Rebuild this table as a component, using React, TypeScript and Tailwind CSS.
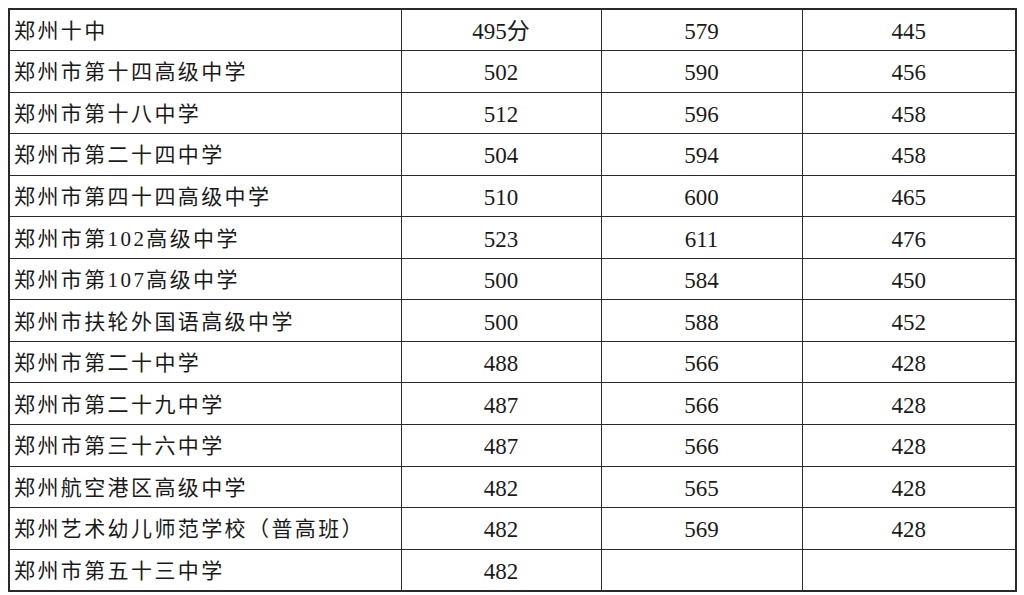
const rows: [string, string, string, string][] = [
  ["郑州十中", "495分", "579", "445"],
  ["郑州市第十四高级中学", "502", "590", "456"],
  ["郑州市第十八中学", "512", "596", "458"],
  ["郑州市第二十四中学", "504", "594", "458"],
  ["郑州市第四十四高级中学", "510", "600", "465"],
  ["郑州市第102高级中学", "523", "611", "476"],
  ["郑州市第107高级中学", "500", "584", "450"],
  ["郑州市扶轮外国语高级中学", "500", "588", "452"],
  ["郑州市第二十中学", "488", "566", "428"],
  ["郑州市第二十九中学", "487", "566", "428"],
  ["郑州市第三十六中学", "487", "566", "428"],
  ["郑州航空港区高级中学", "482", "565", "428"],
  ["郑州艺术幼儿师范学校（普高班）", "482", "569", "428"],
  ["郑州市第五十三中学", "482", "", ""],
];

export default function App() {
  return (
    <div className="w-[1024px] h-[595px] bg-white pt-[8px] pl-[8px] text-[#1a1a1a] font-['Liberation_Serif','Noto_Sans_CJK_SC',serif]">
      <table className="border-collapse border-2 border-[#2a2a2a] table-fixed w-[1007px]">
        <colgroup>
          <col className="w-[392px]" />
          <col className="w-[200px]" />
          <col className="w-[201px]" />
          <col className="w-[214px]" />
        </colgroup>
        <tbody>
          {rows.map((r, i) => (
            <tr key={i} className="h-[41.55px]">
              <td className="border-[1.5px] border-[#2a2a2a] p-0 pl-[4px] pt-[3px] text-[21px] tracking-[2.4px] leading-none whitespace-nowrap">
                {r[0]}
              </td>
              <td className="border-[1.5px] border-[#2a2a2a] p-0 pt-[3px] text-center text-[23px] leading-none">{r[1]}</td>
              <td className="border-[1.5px] border-[#2a2a2a] p-0 pt-[3px] text-center text-[23px] leading-none">{r[2]}</td>
              <td className="border-[1.5px] border-[#2a2a2a] p-0 pt-[3px] text-center text-[23px] leading-none">{r[3]}</td>
            </tr>
          ))}
        </tbody>
      </table>
    </div>
  );
}
